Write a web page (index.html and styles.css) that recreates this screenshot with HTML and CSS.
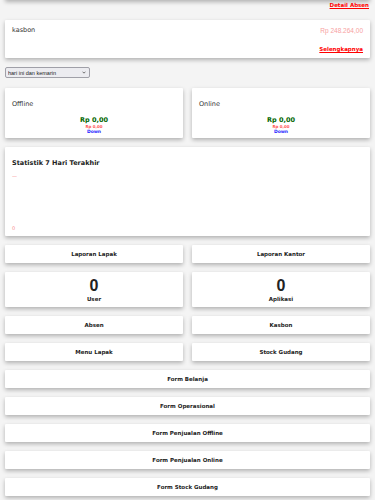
FILE: index.html
```html
<!DOCTYPE html>
<html lang="id">
<head>
  <meta charset="UTF-8">
  <title>Dashboard</title>
  <link rel="stylesheet" href="styles.css">
</head>
<body>
  <div class="page">
    <div class="card top-card"></div>
    <div class="detail-row"><a href="#" class="link-red">Detail Absen</a></div>

    <div class="card kasbon-card">
      <div class="kasbon-head">
        <span class="title-sm">kasbon</span>
        <span class="kasbon-total">Rp 248.264,00</span>
      </div>
      <div class="kasbon-more"><a href="#" class="link-red">Selengkapnya</a></div>
    </div>

    <div class="select-wrap">
      <select class="range-select">
        <option>hari ini dan kemarin</option>
      </select>
      <svg class="chevron" viewBox="0 0 6 4" width="4" height="3"><path d="M0.8 0.8 L3 3 L5.2 0.8" fill="none" stroke="#333" stroke-width="1"/></svg>
    </div>

    <div class="grid2">
      <div class="card sales-card">
        <div class="title-sm">Offline</div>
        <div class="sales-body">
          <div class="sales-now">Rp 0,00</div>
          <div class="sales-prev">Rp 0,00</div>
          <div class="sales-trend">Down</div>
        </div>
      </div>
      <div class="card sales-card">
        <div class="title-sm">Online</div>
        <div class="sales-body">
          <div class="sales-now">Rp 0,00</div>
          <div class="sales-prev">Rp 0,00</div>
          <div class="sales-trend">Down</div>
        </div>
      </div>
    </div>

    <div class="card stat-card">
      <div class="title-bold">Statistik 7 Hari Terakhir</div>
      <div class="chart">
        <span class="axis">—</span>
        <span class="axis">0</span>
      </div>
    </div>

    <div class="grid2">
      <a href="#" class="card btn">Laporan Lapak</a>
      <a href="#" class="card btn">Laporan Kantor</a>
      <div class="card count-card"><b class="count">0</b><span>User</span></div>
      <div class="card count-card"><b class="count">0</b><span>Aplikasi</span></div>
      <a href="#" class="card btn">Absen</a>
      <a href="#" class="card btn">Kasbon</a>
      <a href="#" class="card btn">Menu Lapak</a>
      <a href="#" class="card btn">Stock Gudang</a>
    </div>

    <div class="list">
      <a href="#" class="card btn">Form Belanja</a>
      <a href="#" class="card btn">Form Operasional</a>
      <a href="#" class="card btn">Form Penjualan Offline</a>
      <a href="#" class="card btn">Form Penjualan Online</a>
      <a href="#" class="card btn">Form Stock Gudang</a>
    </div>
  </div>
</body>
</html>
```
FILE: styles.css
```css
body { margin: 0; background: #f4f4f4; font-family: "DejaVu Sans", Verdana, sans-serif; color: #222; font-size: 6px; }
.page { padding: 0 5px 20px; display: flex; flex-direction: column; }
.card { background: #fff; box-shadow: 0 2px 4px rgba(0,0,0,0.28); border-radius: 1px; }
.top-card { height: 20px; margin-top: -20px; }
.detail-row { text-align: right; padding: 1px 1px 0; height: 20px; box-sizing: border-box; line-height: 8px; }
.link-red { color: #f00; font-weight: bold; font-size: 5.5px; }
.kasbon-card { height: 38px; padding: 6px 7px; box-sizing: border-box; display: flex; flex-direction: column; justify-content: space-between; }
.kasbon-head { display: flex; justify-content: space-between; align-items: center; }
.title-sm { font-size: 6.5px; color: #333; }
.kasbon-total { color: #f7a1a1; font-family: "Liberation Sans", Arial, sans-serif; font-size: 6.5px; }
.kasbon-more { text-align: right; }
.select-wrap { position: relative; width: 85px; margin: 9px 0 10px; }
.range-select { appearance: none; -webkit-appearance: none; width: 85px; height: 11px; display: block; font-size: 5.5px; font-family: "Liberation Sans", Arial, sans-serif; padding: 0 2px; border: 1px solid #a0a0a8; border-radius: 2px; background: #ececf0; color: #222; }
.chevron { position: absolute; right: 4px; top: 4px; }
.grid2 { display: grid; grid-template-columns: 1fr 1fr; gap: 9px; margin-bottom: 9px; }
.sales-card { height: 50px; padding: 12px 7px 0; box-sizing: border-box; }
.sales-body { text-align: center; margin-top: 9px; font-weight: bold; line-height: 6px; }
.sales-now { color: #006400; font-size: 6.5px; line-height: 7px; }
.sales-prev { color: #ff5555; font-size: 4px; line-height: 5px; }
.sales-trend { color: #2a2aff; font-size: 4.5px; line-height: 5px; }
.stat-card { height: 89px; padding: 12px 7px 0; box-sizing: border-box; margin-bottom: 9px; }
.title-bold { font-weight: bold; font-size: 6.5px; color: #222; }
.chart { height: 58px; display: flex; flex-direction: column; justify-content: space-between; margin-top: 6px; }
.axis { color: #f78c8c; font-size: 5px; }
.btn { height: 18px; display: flex; align-items: center; justify-content: center; color: #222; text-decoration: none; font-weight: bold; font-size: 5.5px; }
.count-card { height: 35px; display: flex; flex-direction: column; align-items: center; justify-content: center; gap: 2px; font-weight: bold; font-size: 5.5px; padding-top: 1px; box-sizing: border-box; }
.count { font-size: 16px; line-height: 16px; font-family: "Liberation Sans", Arial, sans-serif; }
.list { display: flex; flex-direction: column; gap: 9px; }
```
